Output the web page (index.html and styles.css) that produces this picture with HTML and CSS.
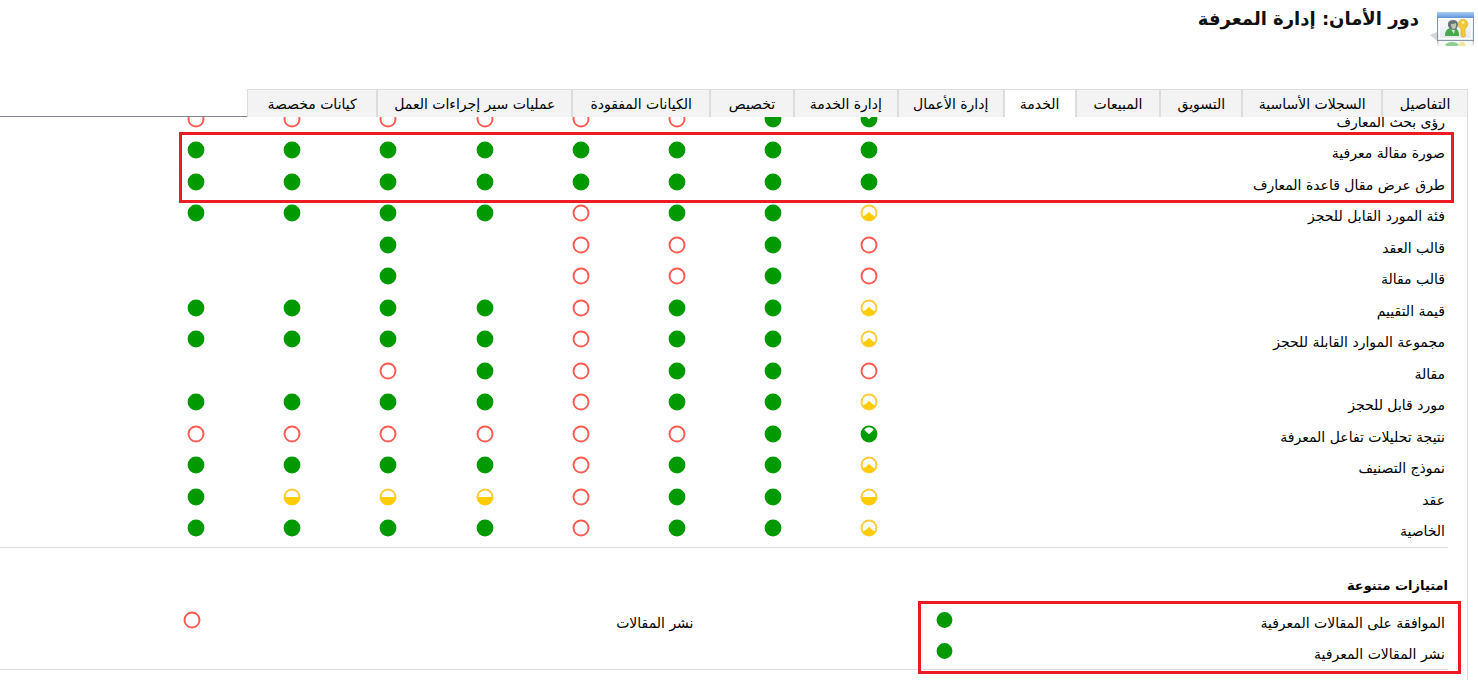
FILE: index.html
```html
<!DOCTYPE html>
<html lang="ar" dir="rtl">
<head>
<meta charset="utf-8">
<title>دور الأمان: إدارة المعرفة</title>
<link rel="stylesheet" href="styles.css">
</head>
<body>
<svg class="sprite" aria-hidden="true">
  <symbol id="full" viewBox="0 0 18 18"><circle cx="9" cy="9" r="8.4" fill="#009a00"/></symbol>
  <symbol id="none" viewBox="0 0 18 18"><circle cx="9" cy="9" r="7.5" fill="#fff" stroke="#ff5a50" stroke-width="1.9"/></symbol>
  <symbol id="user" viewBox="0 0 18 18"><circle cx="9" cy="9" r="7.5" fill="#fff" stroke="#ffcb3d" stroke-width="1.9"/><path d="M2.4 12.8 6 10.7 9 7.8l3 2.9 3.6 2.1A7.8 7.8 0 0 1 2.4 12.8z" fill="#fc0"/></symbol>
  <symbol id="unit" viewBox="0 0 18 18"><circle cx="9" cy="9" r="7.5" fill="#fff" stroke="#ffcb3d" stroke-width="1.9"/><path d="M.8 9h16.400a8.200 8.200 0 0 1-16.400 0z" fill="#fc0"/></symbol>
  <symbol id="parent" viewBox="0 0 18 18"><circle cx="9" cy="9" r="8.400" fill="#009a00"/><path d="M4.200 4.600Q9-.2 13.800 4.600L12 6.400 9 9.200 6 6.400z" fill="#fff"/></symbol>
</svg>

<header class="page-header">
  <svg class="role-icon" viewBox="0 0 48 40" aria-hidden="true">
    <defs>
      <linearGradient id="bar" x2="0" y2="1"><stop stop-color="#a9cdf5"/><stop offset="1" stop-color="#5f94d6"/></linearGradient>
      <linearGradient id="pane" x2="0" y2="1"><stop stop-color="#fff"/><stop offset="1" stop-color="#e4e9ee"/></linearGradient>
      <linearGradient id="shade" x2="0" y2="1"><stop stop-color="#b8bcc2"/><stop offset="1" stop-color="#fff"/></linearGradient>
    </defs>
    <path d="M0 26 7 23v9z" fill="#d6d6d6"/>
    <rect x="7" y="32" width="37" height="6" fill="url(#shade)"/>
    <path d="M8.500 32h34v5h-34z" fill="#f7f8f8"/>
    <path d="M15 36q2-3 7-3t7 3l-2 1h-10z" fill="#8ccf91"/>
    <path d="M30 33h4l2 4h-7z" fill="#f6e39a"/>
    <rect x="7.500" y="3.500" width="36" height="28" fill="url(#pane)" stroke="#8a97a6"/>
    <rect x="9.500" y="9.500" width="32" height="20" fill="none" stroke="#fff"/>
    <rect x="7" y="3" width="37" height="6" fill="url(#bar)"/>
    <path d="M15 27q0-7 5-8h5q4 1 4 8z" fill="#46a94b"/>
    <path d="M21 20h4l-1 5z" fill="#d9efd5"/>
    <path d="M18 17q-1-6 5-6 5 0 5 5-1 5-4 5-4 0-6-4z" fill="#687377"/>
    <path d="M21 15q4 0 5-1 1 5-2 6-3 0-3-5z" fill="#bcc8ae"/>
    <path d="M31 19.500a4.800 4.800 0 1 1 4 0v5.500l1 1-2 2.500-3-1.500z" fill="#f2c93a" stroke="#d9a91f" stroke-width=".6"/>
    <circle cx="33" cy="13.500" r="1.300" fill="#fff6cf"/>
  </svg>
  <h1 class="title">دور الأمان: إدارة المعرفة</h1>
</header>

<nav class="tab-row">
  <div class="tabs" role="tablist">
    <button class="tab" role="tab">التفاصيل</button>
    <button class="tab" role="tab">السجلات الأساسية</button>
    <button class="tab" role="tab">التسويق</button>
    <button class="tab" role="tab">المبيعات</button>
    <button class="tab active" role="tab" aria-selected="true">الخدمة</button>
    <button class="tab" role="tab">إدارة الأعمال</button>
    <button class="tab" role="tab">إدارة الخدمة</button>
    <button class="tab" role="tab">تخصيص</button>
    <button class="tab" role="tab">الكيانات المفقودة</button>
    <button class="tab" role="tab">عمليات سير إجراءات العمل</button>
    <button class="tab" role="tab">كيانات مخصصة</button>
  </div>
</nav>

<main class="panel">
  <section class="entities">
    <table class="grid">
      <tbody id="rows"></tbody>
    </table>
    <div class="mark mark-rows"></div>
  </section>

  <section class="misc">
    <h2 class="subtitle">امتيازات متنوعة</h2>
    <table class="misc-grid">
      <tbody>
        <tr>
          <th scope="row">الموافقة على المقالات المعرفية</th>
          <td><svg class="dot narrow" preserveAspectRatio="none"><use href="#full"/></svg></td>
          <th scope="row">نشر المقالات</th>
          <td><svg class="dot"><use href="#none"/></svg></td>
        </tr>
        <tr>
          <th scope="row">نشر المقالات المعرفية</th>
          <td><svg class="dot narrow"><use href="#full"/></svg></td>
          <th></th>
          <td></td>
        </tr>
      </tbody>
    </table>
    <div class="mark mark-misc"></div>
  </section>
</main>
<script src="script.js"></script>
</body>
</html>
```
FILE: styles.css
```css
* { box-sizing: border-box; }
html, body { height: 100%; }
body {
  margin: 0;
  display: flex;
  flex-direction: column;
  overflow: hidden;
  background: #fff;
  color: #000;
  font: 14px/20px "DejaVu Sans", sans-serif;
}
.sprite { position: absolute; width: 0; height: 0; }

.page-header {
  display: flex;
  flex: none;
  gap: 11px;
  height: 89px;
  padding: 9px 0 0;
}
.role-icon { flex: none; width: 48px; height: 40px; }
.title { margin: 0; font-size: 18px; line-height: 20px; font-weight: 700; color: #111; }

.tab-row { display: flex; flex: none; padding-right: 10px; }
.tab-row::after { content: ""; flex: 1; border-bottom: 1px solid #80858f; }
.tabs {
  display: grid;
  flex: none;
  grid-template-columns: 86fr 140fr 82fr 85fr 72fr 106fr 104fr 84fr 138fr 195fr 129fr;
  width: 83.2%;
  border: 1px solid #dcdcdc;
  border-bottom: 0;
}
.tab {
  height: 27px;
  padding: 0;
  border: 0;
  border-left: 2px solid #dcdcdc;
  background: #f3f3f3;
  color: #000;
  font: inherit;
  white-space: nowrap;
}
.tab:last-child { border-left: 0; }
.tab.active { background: #fff; }

.panel {
  flex: 1;
  min-height: 0;
  overflow: hidden;
  margin-right: 10px;
  padding-right: 19px;
  border-right: 1px solid #dcdcdc;
}
table { border-collapse: collapse; table-layout: fixed; }
th { font-weight: 400; text-align: right; }
th, td { padding: 0; vertical-align: top; }

.entities { position: relative; margin-top: -7px; border-bottom: 1px solid #dcdcdc; }
.grid { width: 89.8%; }
.grid th { width: 40.8%; padding: 2px 3px 0 0; }
.grid td { text-align: center; }
.grid tr { height: 31px; }
.grid tr:nth-child(even) { height: 32px; }
.grid tr:last-child { height: 28px; }
.dot { display: inline-block; width: 18px; height: 18px; vertical-align: top; }

.misc { position: relative; border-bottom: 1px solid #dcdcdc; }
.subtitle { margin: 0; padding: 28px 0 15px; font-size: 13px; line-height: 20px; }
.misc-grid { width: 100%; }
.misc-grid th { width: 34.2%; padding: 2px 3px 0 0; }
.misc-grid td { width: 17.7%; }
.misc-grid td:last-child { width: 13.9%; }
.misc-grid tr { height: 31px; }
.misc-grid tr:last-child { height: 27px; }
.narrow { width: 17px; }

.mark { position: absolute; border: 3px solid #ed1c24; }
.mark-rows { top: 22px; right: -6px; left: 179px; height: 71px; }
.mark-misc { top: 53px; right: -13px; width: 543px; height: 73px; }
```
FILE: script.js
```js
const kinds = { f: "full", n: "none", u: "user", b: "unit", p: "parent" };
const rows = [
  ["رؤى بحث المعارف", "pfnnnnnn"],
  ["صورة مقالة معرفية", "ffffffff"],
  ["طرق عرض مقال قاعدة المعارف", "ffffffff"],
  ["فئة المورد القابل للحجز", "uffnffff"],
  ["قالب العقد", "nfnn-f--"],
  ["قالب مقالة", "nfnn-f--"],
  ["قيمة التقييم", "uffnffff"],
  ["مجموعة الموارد القابلة للحجز", "uffnffff"],
  ["مقالة", "nffnfn--"],
  ["مورد قابل للحجز", "uffnffff"],
  ["نتيجة تحليلات تفاعل المعرفة", "pfnnnnnn"],
  ["نموذج التصنيف", "uffnffff"],
  ["عقد", "bffnbbbf"],
  ["الخاصية", "uffnffff"]
];
document.getElementById("rows").innerHTML = rows.map(([name, levels]) =>
  `<tr><th scope="row">${name}</th>` + [...levels].map(k =>
    `<td>${kinds[k] ? `<svg class="dot"><use href="#${kinds[k]}"/></svg>` : ""}</td>`).join("") + "</tr>"
).join("");
```
